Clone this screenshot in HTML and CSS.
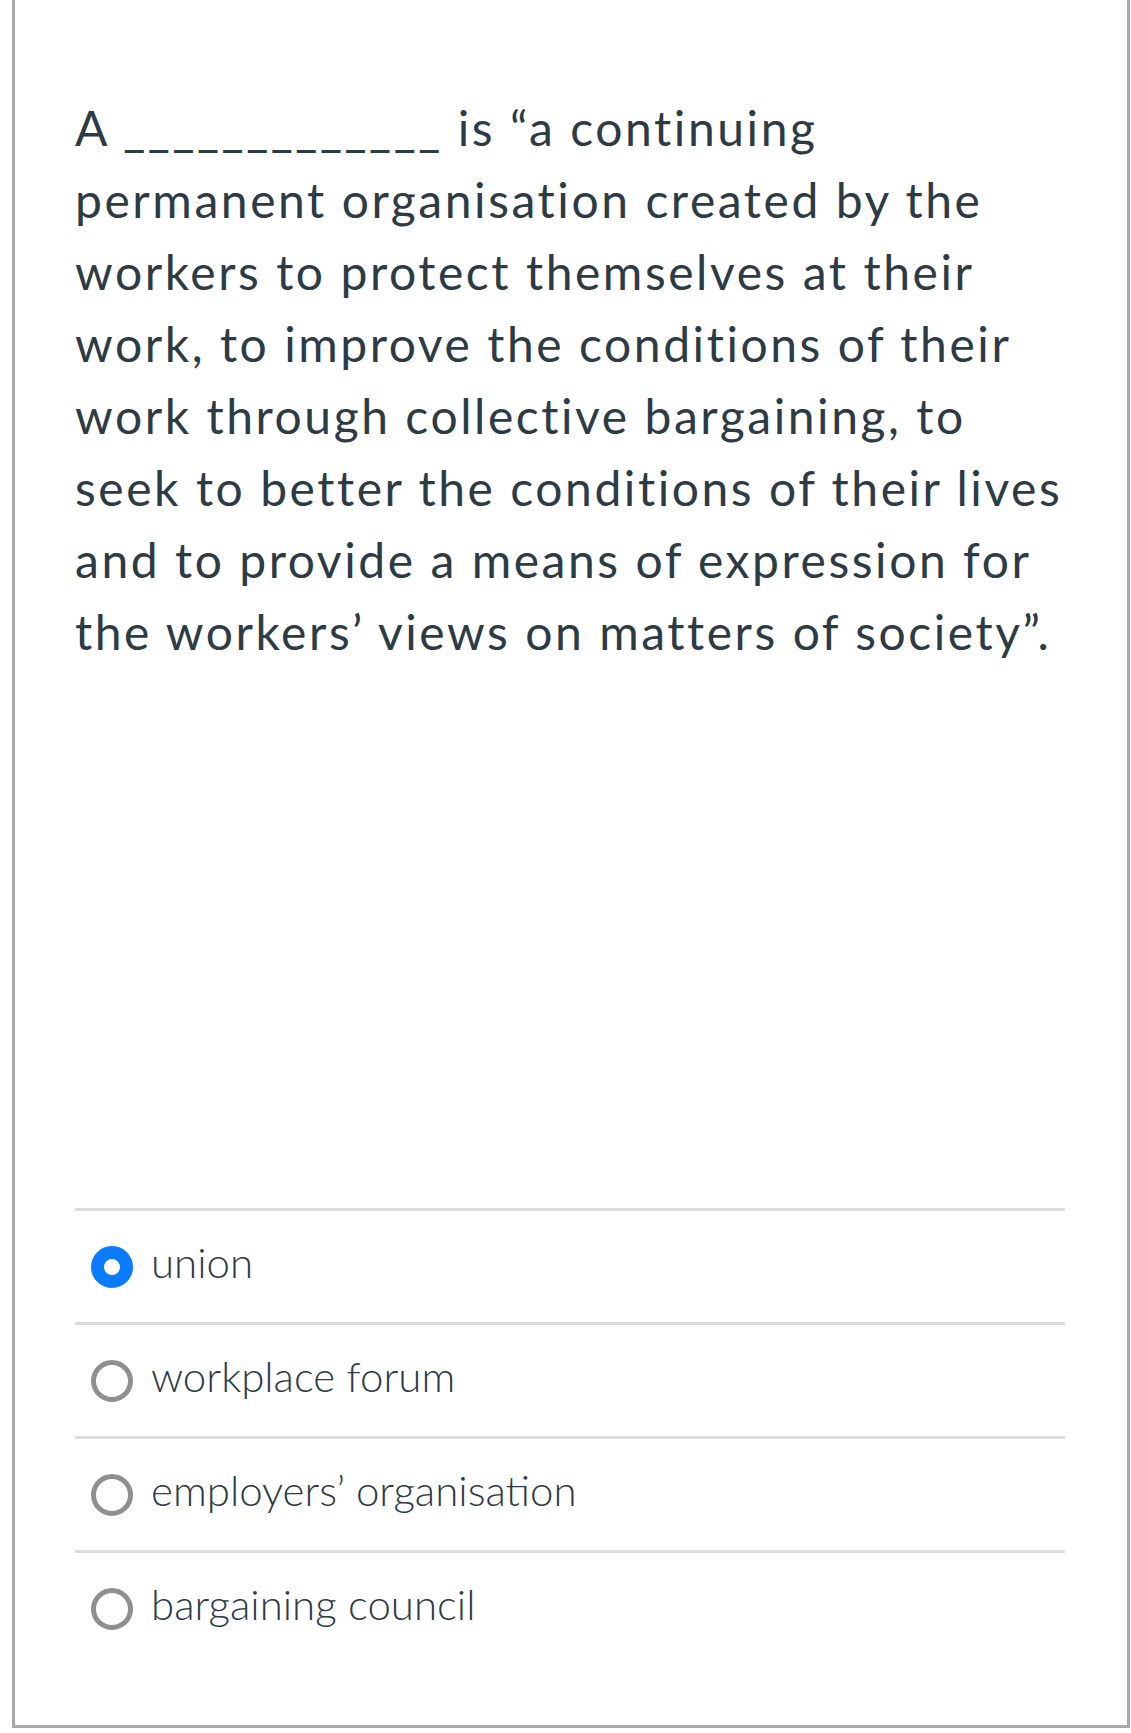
FILE: index.html
```html
<!DOCTYPE html>
<html lang="en">
<head>
<meta charset="utf-8">
<title>Question</title>
<link rel="stylesheet" href="styles.css">
</head>
<body>
<div class="card">
  <div class="question">
    <p class="question-text">A _____________ is “a continuing permanent organisation created by the workers to protect themselves at their work, to improve the conditions of their work through collective bargaining, to seek to better the conditions of their lives and to provide a means of expression for the workers’ views on matters of society”.</p>
  </div>
  <div class="answers">
    <label class="answer">
      <span class="radio checked"></span>
      <span class="answer-text">union</span>
    </label>
    <label class="answer">
      <span class="radio"></span>
      <span class="answer-text">workplace forum</span>
    </label>
    <label class="answer">
      <span class="radio"></span>
      <span class="answer-text">employers’ organisation</span>
    </label>
    <label class="answer">
      <span class="radio"></span>
      <span class="answer-text">bargaining council</span>
    </label>
  </div>
</div>
</body>
</html>
```
FILE: styles.css
```css
html, body {
  margin: 0;
  padding: 0;
  background: #ffffff;
}

body {
  font-family: Lato, "Noto Sans", sans-serif;
  color: #2d3b45;
  width: 1131px;
  height: 1733px;
  overflow: hidden;
}

.card {
  margin-left: 12px;
  margin-right: 1px;
  border: 3px solid #a9a9a9;
  border-top: none;
  box-sizing: border-box;
  height: 1728px;
  padding: 92px 0 0 60px;
}

.question {
  width: 990px;
  height: 1116px;
}

.question-text {
  margin: 0;
  font-size: 48px;
  line-height: 72px;
  letter-spacing: 2.55px;
}

.answers {
  width: 990px;
  display: flex;
  flex-direction: column;
}

.answer {
  display: flex;
  align-items: center;
  gap: 18px;
  height: 111px;
  border-top: 3px solid #dcdcdc;
  padding-left: 16px;
}

.radio {
  width: 42px;
  height: 42px;
  box-sizing: border-box;
  border-radius: 50%;
  border: 5px solid #8f8f8f;
  flex: none;
}

.radio.checked {
  border: 13px solid #0a7aff;
}

.answer-text {
  font-size: 42px;
  font-weight: 300;
  padding-bottom: 10px;
}
```
